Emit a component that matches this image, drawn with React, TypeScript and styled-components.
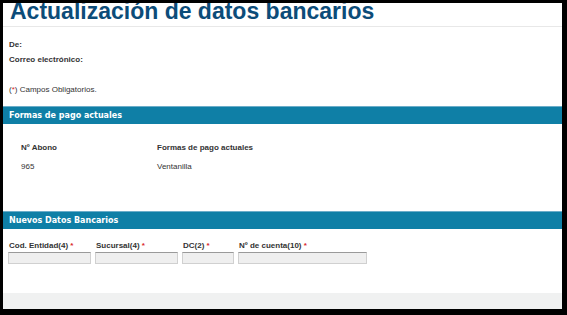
import React from 'react'
import styled, { createGlobalStyle } from 'styled-components'

const GlobalStyle = createGlobalStyle`
  html, body {
    margin: 0;
    padding: 0;
    background: #000;
  }
  body {
    width: 567px;
    height: 315px;
    overflow: hidden;
    font-family: 'Liberation Sans', Arial, sans-serif;
  }
`

const fields = [
  { label: 'Cod. Entidad(4)', width: 83 },
  { label: 'Sucursal(4)', width: 83 },
  { label: 'DC(2)', width: 52 },
  { label: 'Nº de cuenta(10)', width: 129 },
]

export default function App() {
  return (
    <>
      <GlobalStyle />
      <Page>
        <Title>Actualización de datos bancarios</Title>
        <Info>
          <Line bold>De:</Line>
          <Line bold>Correo electrónico:</Line>
          <Note>
            (<Star>*</Star>) Campos Obligatorios.
          </Note>
        </Info>

        <SectionBar>Formas de pago actuales</SectionBar>
        <PayTable>
          <Line bold>Nº Abono</Line>
          <Line bold>Formas de pago actuales</Line>
          <Line>965</Line>
          <Line>Ventanilla</Line>
        </PayTable>

        <SectionBar>Nuevos Datos Bancarios</SectionBar>
        <FieldRow>
          {fields.map((f) => (
            <Field key={f.label} $width={f.width}>
              <FieldLabel>
                {f.label} <Star>*</Star>
              </FieldLabel>
              <TextBox />
            </Field>
          ))}
        </FieldRow>

        <Footer />
      </Page>
    </>
  )
}

const Page = styled.div`
  margin: 3px 5px 0 3px;
  height: 306px;
  background: #fff;
  display: flex;
  flex-direction: column;
  overflow: hidden;
`

const Title = styled.h1`
  margin: -3px 0 0;
  padding: 0 0 0 7px;
  height: 27px;
  font-size: 23px;
  line-height: 23px;
  font-weight: 700;
  color: #0c4c79;
  border-bottom: 1px solid #e8e8e8;
  box-sizing: border-box;
  white-space: nowrap;
`

const Info = styled.div`
  display: flex;
  flex-direction: column;
  padding: 10px 0 0 6px;
`

const Line = styled.div<{ bold?: boolean }>`
  font-size: 8px;
  line-height: 15px;
  height: 15px;
  color: #333;
  font-weight: ${(p) => (p.bold ? 700 : 400)};
`

const Note = styled(Line)`
  margin-top: 15px;
`

const Star = styled.span`
  color: #d9262b;
`

const SectionBar = styled.div`
  margin-top: 9px;
  height: 17px;
  border-top: 1px solid #6badc9;
  background: #0f7fa6;
  color: #fff;
  font-family: 'DejaVu Sans', Verdana, sans-serif;
  font-weight: 700;
  font-size: 8px;
  line-height: 17px;
  padding-left: 6px;
`

const PayTable = styled.div`
  display: grid;
  grid-template-columns: 136px auto;
  row-gap: 4px;
  padding: 16px 0 28px 18px;
`

const FieldRow = styled.div`
  display: flex;
  gap: 4px;
  padding: 11px 0 0 5px;
`

const Field = styled.div<{ $width: number }>`
  width: ${(p) => p.$width}px;
  display: flex;
  flex-direction: column;
`

const FieldLabel = styled.div`
  font-size: 8px;
  line-height: 12px;
  height: 12px;
  font-weight: 700;
  color: #333;
  padding-left: 1px;
  white-space: nowrap;
`

const TextBox = styled.div`
  height: 12px;
  box-sizing: border-box;
  border: 1px solid #d0d0d0;
  border-top-color: #9a9a9a;
  background: #efefef;
`

const Footer = styled.div`
  margin-top: auto;
  height: 16px;
  background: #f0f1f1;
`
